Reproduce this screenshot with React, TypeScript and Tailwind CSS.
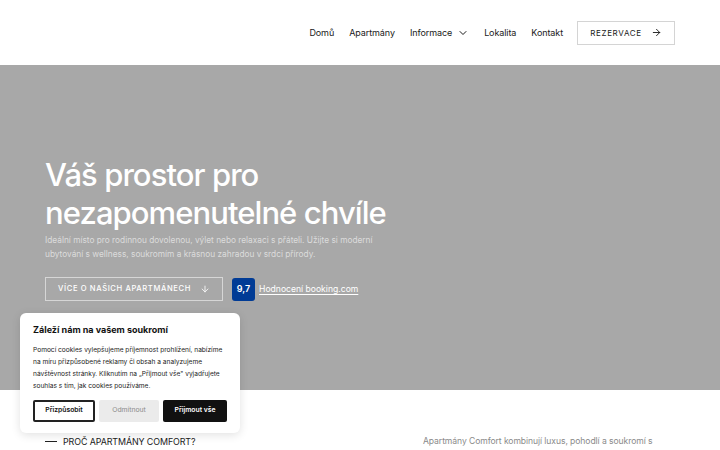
import { ArrowRight, ArrowDown, ChevronDown } from "lucide-react";

const NAV = ["Domů", "Apartmány", "Informace", "Lokalita", "Kontakt"];

function Header() {
  return (
    <header className="flex h-[65px] items-center justify-end bg-white pr-[45px]">
      <nav className="flex items-center gap-[15px] pt-[1px] text-[9px] tracking-[-0.01em] text-[#1a1a1a]">
        {NAV.map((item) => (
          <span key={item} className="flex items-center gap-[5px]">
            {item}
            {item === "Informace" && <ChevronDown className="h-[12px] w-[12px]" strokeWidth={2} />}
          </span>
        ))}
      </nav>
      <button
        type="button"
        className="ml-[14px] flex h-[24px] w-[98px] items-center justify-center gap-[9px] border border-[#d4d4d4] text-[8px] tracking-[0.08em] text-[#1a1a1a]"
      >
        REZERVACE
        <ArrowRight className="h-[11px] w-[11px]" strokeWidth={2} />
      </button>
    </header>
  );
}

function Hero() {
  return (
    <section className="flex h-[325px] flex-col bg-[#a8a8a8] pl-[45px] pt-[91px]">
      <h1 className="text-[31px] font-medium leading-[38px] tracking-[-0.03em] text-white">
        Váš prostor pro
        <br />
        nezapomenutelné chvíle
      </h1>
      <p className="mt-[1px] w-[340px] text-[8.3px] leading-[14px] text-[#dcdcdc]">
        Ideální místo pro rodinnou dovolenou, výlet nebo relaxaci s přáteli. Užijte si moderní ubytování
        s wellness, soukromím a krásnou zahradou v srdci přírody.
      </p>
      <div className="mt-[16px] flex items-center">
        <button
          type="button"
          className="flex h-[24px] w-[178px] items-center justify-center gap-[9px] border border-[#d6d6d6] text-[7.6px] font-medium tracking-[0.08em] text-white"
        >
          VÍCE O NAŠICH APARTMÁNECH
          <ArrowDown className="h-[10px] w-[10px]" strokeWidth={2} />
        </button>
        <span className="ml-[9px] flex h-[23px] w-[23px] items-center justify-center rounded-[3px] bg-[#003b95] text-[9px] font-semibold text-white">
          9,7
        </span>
        <span className="ml-[4px] text-[8.6px] text-white underline underline-offset-2">
          Hodnocení booking.com
        </span>
      </div>
    </section>
  );
}

function CookieBox() {
  return (
    <div className="absolute left-[20px] top-[313px] w-[220px] rounded-[6px] bg-white px-[13px] pb-[11px] pt-[10px] shadow-[0_2px_10px_rgba(0,0,0,0.12)]">
      <div className="text-[9px] font-bold text-[#111]">Záleží nám na vašem soukromí</div>
      <p className="mt-[7px] text-[6.6px] leading-[12px] text-[#222]">
        Pomocí cookies vylepšujeme příjemnost prohlížení, nabízíme na míru přizpůsobené reklamy či obsah a
        analyzujeme návštěvnost stránky. Kliknutím na „Přijmout vše" vyjadřujete souhlas s tím, jak cookies
        používáme.
      </p>
      <div className="mt-[8px] flex gap-[4px]">
        <button
          type="button"
          className="h-[22px] w-[62px] rounded-[2px] border-2 border-[#222] text-[6.8px] font-semibold text-[#111]"
        >
          Přizpůsobit
        </button>
        <button type="button" className="h-[22px] w-[60px] rounded-[2px] bg-[#ebebeb] text-[6.8px] text-[#8a8a8a]">
          Odmítnout
        </button>
        <button type="button" className="h-[22px] w-[64px] rounded-[2px] bg-[#111] text-[6.8px] font-semibold text-white">
          Přijmout vše
        </button>
      </div>
    </div>
  );
}

function Intro() {
  return (
    <section className="flex bg-white pl-[45px] pt-[44px]">
      <div className="flex w-[378px] items-center gap-[6px] self-start pt-[1px]">
        <span className="h-[1.5px] w-[12px] bg-[#222]" />
        <span className="text-[8.9px] tracking-[-0.01em] text-[#222]">PROČ APARTMÁNY COMFORT?</span>
      </div>
      <p className="w-[248px] text-[8.6px] leading-[15px] tracking-[-0.01em] text-[#8a8a8a]">
        Apartmány Comfort kombinují luxus, pohodlí a soukromí s vlastní zahradou, wellness a krásným výhledem
        do okolní přírody.
      </p>
    </section>
  );
}

export default function App() {
  return (
    <div className="relative h-[450px] w-[720px] overflow-hidden bg-white font-['Inter',sans-serif]">
      <Header />
      <Hero />
      <Intro />
      <CookieBox />
    </div>
  );
}
